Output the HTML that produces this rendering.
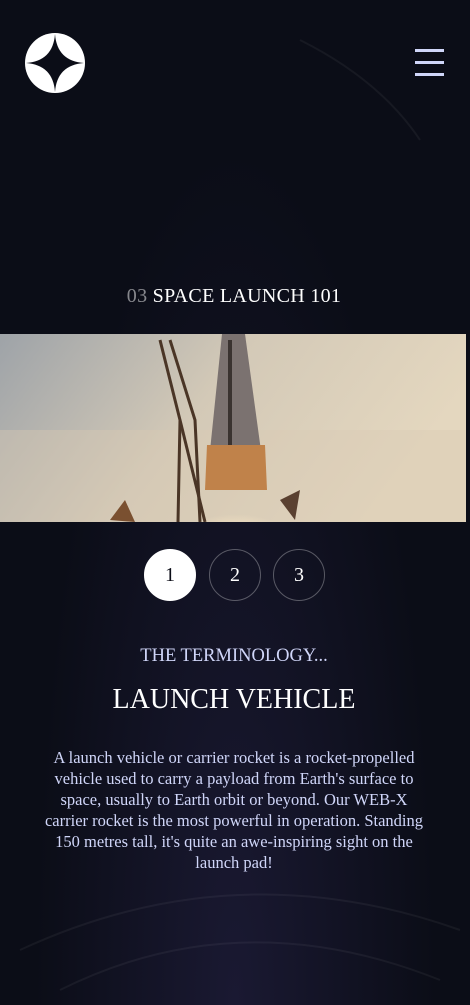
<!DOCTYPE html>
<html><head><meta charset="utf-8"><style>
html,body{margin:0;padding:0}
body{width:470px;height:1005px;overflow:hidden;background:radial-gradient(ellipse at 50% 100%,#1a1932 0%,#0b0d17 60%);background-color:#0b0d17;font-family:"Liberation Serif",serif;color:#fff;position:relative}
.abs{position:absolute}
.c{text-align:center;width:468px;left:0}
.num{display:inline-block;width:50px;height:50px;border:1px solid rgba(255,255,255,.3);border-radius:50%;text-align:center;line-height:50px;font-size:20px;position:absolute;top:549px}
</style></head><body>
<svg class="abs" style="left:0;top:0" width="470" height="1005">
<g stroke="rgba(255,255,255,.05)" stroke-width="2" fill="none">
<path d="M20 950 Q235 850 460 930"/><path d="M60 990 Q240 900 440 980"/><path d="M300 40 Q380 80 420 140"/>
</g>
<circle cx="55" cy="63" r="30" fill="#fff"/>
<path d="M55 34 Q57 61 84 63 Q57 65 55 92 Q53 65 26 63 Q53 61 55 34Z" fill="#0b0d17"/>
<rect x="415" y="49" width="29" height="3" fill="#d0d6f9"/><rect x="415" y="61" width="29" height="3" fill="#d0d6f9"/><rect x="415" y="73" width="29" height="3" fill="#d0d6f9"/>
<defs><linearGradient id="sky" x1="0" x2="1" y1="0" y2="0.3"><stop offset="0" stop-color="#9ea3a8"/><stop offset=".5" stop-color="#d3c9b7"/><stop offset="1" stop-color="#e4d7bf"/></linearGradient>
<radialGradient id="fire" cx=".5" cy="1" r=".6"><stop offset="0" stop-color="#fff"/><stop offset=".5" stop-color="#fde9c6"/><stop offset="1" stop-color="#fde9c6" stop-opacity="0"/></radialGradient>
<clipPath id="cp"><rect x="0" y="334" width="466" height="188"/></clipPath></defs>
<g clip-path="url(#cp)">
<rect x="0" y="334" width="466" height="188" fill="url(#sky)"/>
<rect x="0" y="430" width="466" height="92" fill="#d9cbb3" opacity=".4"/>
<path d="M222 334 L245 334 L265 480 L207 480Z" fill="#7b7270"/>
<path d="M228 340 L232 340 L232 480 L228 480Z" fill="#3a3330"/>
<path d="M207 445 L265 445 L267 490 L205 490Z" fill="#c0824a"/>
<ellipse cx="236" cy="522" rx="60" ry="40" fill="url(#fire)"/>
<g stroke="#4a3526" stroke-width="3" fill="none"><path d="M160 340 L180 420 L178 522"/><path d="M170 340 L195 420 L200 522"/><path d="M180 420 L205 522"/></g>
<path d="M280 500 L300 490 L295 520Z" fill="#5a4030"/><path d="M110 520 L125 500 L135 522Z" fill="#7a5030"/>
</g>
</svg>
<div class="abs c" style="top:285px;font-size:20px;letter-spacing:.3px"><span style="color:rgba(255,255,255,.5)">03</span> SPACE LAUNCH 101</div>
<div class="num" style="left:144px;background:#fff;color:#0b0d17;border-color:#fff">1</div>
<div class="num" style="left:209px">2</div>
<div class="num" style="left:273px">3</div>
<div class="abs c" style="top:646px;font-size:18.5px;color:#d0d6f9">THE TERMINOLOGY...</div>
<div class="abs c" style="top:684px;font-size:28px">LAUNCH VEHICLE</div>
<div class="abs c" style="top:747px;font-size:16.5px;line-height:21px;color:#d0d6f9;white-space:nowrap">A launch vehicle or carrier rocket is a rocket-propelled<br>vehicle used to carry a payload from Earth's surface to<br>space, usually to Earth orbit or beyond. Our WEB-X<br>carrier rocket is the most powerful in operation. Standing<br>150 metres tall, it's quite an awe-inspiring sight on the<br>launch pad!</div>
</body></html>
